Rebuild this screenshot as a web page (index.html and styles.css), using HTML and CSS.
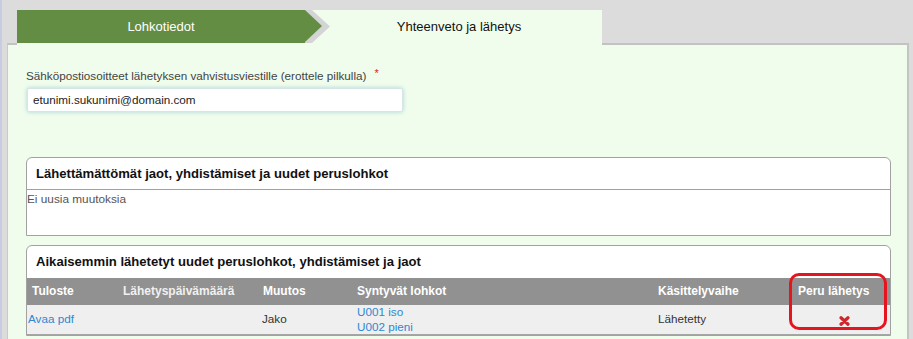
FILE: index.html
```html
<!DOCTYPE html>
<html lang="fi">
<head>
<meta charset="utf-8">
<title>Yhteenveto ja lähetys</title>
<link rel="stylesheet" href="styles.css">
</head>
<body>
<div class="page">
  <div class="tabs">
    <div class="tab tab-done">Lohkotiedot</div>
    <div class="tab tab-active">Yhteenveto ja lähetys</div>
  </div>
  <div class="panel">
    <label class="field-label">Sähköpostiosoitteet lähetyksen vahvistusviestille (erottele pilkulla)<span class="req">*</span></label>
    <div class="field-input">etunimi.sukunimi@domain.com</div>

    <section class="box box-first">
      <h2 class="box-title">Lähettämättömät jaot, yhdistämiset ja uudet peruslohkot</h2>
      <div class="box-body">Ei uusia muutoksia</div>
    </section>

    <section class="box box-second">
      <h2 class="box-title">Aikaisemmin lähetetyt uudet peruslohkot, yhdistämiset ja jaot</h2>
      <table class="grid">
        <colgroup>
          <col class="c1"><col class="c2"><col class="c3"><col class="c4"><col class="c5"><col class="c6">
        </colgroup>
        <thead>
          <tr>
            <th>Tuloste</th>
            <th class="dim">Lähetyspäivämäärä</th>
            <th>Muutos</th>
            <th>Syntyvät lohkot</th>
            <th>Käsittelyvaihe</th>
            <th>Peru lähetys</th>
          </tr>
        </thead>
        <tbody>
          <tr>
            <td class="first"><a href="#">Avaa pdf</a></td>
            <td></td>
            <td>Jako</td>
            <td><a href="#">U001 iso</a><br><a href="#">U002 pieni</a></td>
            <td>Lähetetty</td>
            <td class="cancel"><svg class="xicon" width="11" height="10" viewBox="0 0 11 10"><path d="M2 1.8 L9 8.2 M9 1.8 L2 8.2" stroke="#cf252b" stroke-width="3.2" stroke-linecap="round"/></svg></td>
          </tr>
        </tbody>
      </table>
      <div class="highlight"></div>
    </section>
  </div>
</div>
</body>
</html>
```
FILE: styles.css
```css
* { box-sizing: border-box; }

html, body {
  margin: 0;
  height: 339px;
  overflow: hidden;
}

body {
  background: #dcdcdc;
  border-left: 2px solid #c6cde0;
  font-family: "Liberation Sans", Arial, sans-serif;
  color: #222;
}

.page {
  padding: 10px 4px 0 5px;
}

.tabs {
  display: flex;
  margin-left: 10px;
  height: 33px;
  position: relative;
  z-index: 2;
}

.tab {
  height: 35px;
  font-size: 13px;
  line-height: 33px;
  text-align: center;
}

.tab-done {
  position: relative;
  z-index: 3;
  width: 288px;
  background: #638d42;
  background-clip: padding-box;
  border-bottom: 2px solid #f0fdec;
  color: #fff;
}

/* gray chevron band behind the green arrow */
.tab-done::before {
  content: "";
  position: absolute;
  top: 0;
  left: 100%;
  width: 25px;
  height: 33px;
  background: #d4d4d4;
  clip-path: polygon(0 0, 7px 0, 25px 50%, 7px 100%, 0 100%);
}

.tab-done::after {
  content: "";
  position: absolute;
  top: 0;
  left: 100%;
  width: 0;
  height: 0;
  border-top: 16.5px solid transparent;
  border-bottom: 16.5px solid transparent;
  border-left: 17px solid #638d42;
}

.tab-active {
  width: 297px;
  background: #f0fdec;
  color: #111;
  padding-left: 11px;
}

.panel {
  background: #f0fdec;
  border-top: 2px solid #c2c2c2;
  border-left: 1px solid #c9c9c9;
  border-right: 2px solid #c4c4c4;
  padding: 23px 16px 0 18px;
  height: 300px;
}

.field-label {
  display: block;
  font-size: 11.7px;
  line-height: 15px;
  color: #444;
}

.req {
  color: #e3141c;
  font-size: 11px;
  line-height: 1;
  vertical-align: top;
  margin-left: 8px;
}

.field-input {
  margin: 5px 0 0 1px;
  width: 376px;
  height: 24px;
  background: #fff;
  border: 1px solid #d4e6ea;
  border-radius: 2px;
  box-shadow: 0 0 4px rgba(110, 180, 200, 0.55);
  padding-left: 5px;
  font-size: 11.7px;
  line-height: 22px;
  color: #222;
}

.box {
  background: #fff;
  border: 1px solid #a2a2a2;
  border-radius: 6px 6px 0 0;
  position: relative;
}

.box-first {
  margin-top: 45px;
}

.box-second {
  margin-top: 9px;
}

.box-title {
  margin: 0;
  height: 32px;
  padding-left: 9px;
  font-size: 13.1px;
  line-height: 32px;
  font-weight: bold;
  color: #111;
}

.box-first .box-title {
  border-bottom: 1px solid #a0a0a0;
}

.box-body {
  height: 45px;
  padding-top: 2px;
  font-size: 11.8px;
  line-height: 15px;
  color: #555;
}

.grid {
  width: 100%;
  border-collapse: collapse;
  table-layout: fixed;
  font-size: 11.7px;
}

.c1 { width: 91px; }
.c2 { width: 140px; }
.c3 { width: 94px; }
.c4 { width: 301px; }
.c5 { width: 140px; }
.c6 { width: 97px; }

.grid th {
  background: #919191;
  color: #fff;
  font-size: 12px;
  font-weight: bold;
  text-align: left;
  height: 26px;
  padding: 0 0 0 5px;
  line-height: 27px;
}

.grid th.dim {
  color: #f0f0f0;
}

.grid td {
  background: #efefef;
  height: 29px;
  padding: 0 0 0 4px;
  line-height: 14.5px;
  vertical-align: middle;
  color: #333;
  border-bottom: 1px solid #a6a6a6;
}

.grid td:nth-child(4),
.grid td:nth-child(5) {
  padding-left: 5px;
}

.grid td.first {
  padding-left: 1px;
}

.grid td.cancel {
  text-align: center;
  padding-left: 0;
  padding-top: 2px;
}

.grid a {
  color: #2d88d4;
  text-decoration: none;
}

.xicon {
  display: inline-block;
  vertical-align: middle;
  margin-left: 5px;
}

.highlight {
  position: absolute;
  left: 762px;
  top: 27px;
  width: 98px;
  height: 57px;
  border: 3px solid #e6141f;
  border-radius: 10px;
  pointer-events: none;
}
```
